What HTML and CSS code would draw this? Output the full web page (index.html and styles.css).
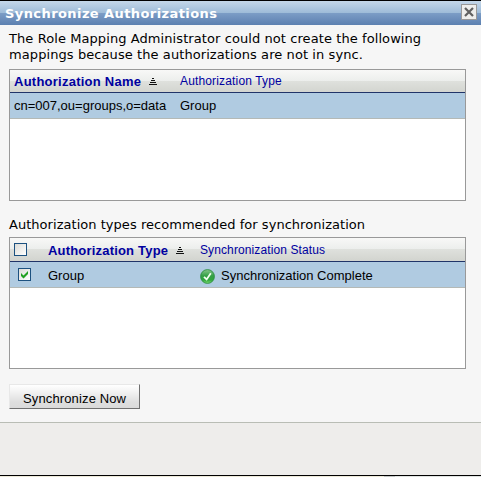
FILE: index.html
```html
<!DOCTYPE html>
<html lang="en">
<head>
<meta charset="utf-8">
<title>Synchronize Authorizations</title>
<link rel="stylesheet" href="styles.css">
</head>
<body>
<div class="dialog">
  <header class="titlebar">
    <h1 class="title">Synchronize Authorizations</h1>
    <button class="close" aria-label="Close">
      <svg width="10" height="10" viewBox="0 0 10 10"><path d="M1 1L9 9M9 1L1 9" stroke="#606060" stroke-width="2.2"/></svg>
    </button>
  </header>
  <main class="content">
    <p class="message">The Role Mapping Administrator could not create the following<br>mappings because the authorizations are not in sync.</p>
    <section class="grid mappings">
      <div class="head">
        <span class="sorted">Authorization Name</span>
        <svg class="sort" width="8" height="7" viewBox="0 0 8 7" shape-rendering="crispEdges"><path d="M3 .5H5M2 2.5H6M1 4.5H7M0 6.5H8" stroke="#111"/></svg>
        <span class="column type">Authorization Type</span>
      </div>
      <div class="row">
        <span class="name">cn=007,ou=groups,o=data</span>
        <span>Group</span>
      </div>
    </section>
    <p class="label">Authorization types recommended for synchronization</p>
    <section class="grid types">
      <div class="head">
        <span class="box all"></span>
        <span class="sorted kind">Authorization Type</span>
        <svg class="sort" width="8" height="7" viewBox="0 0 8 7" shape-rendering="crispEdges"><path d="M3 .5H5M2 2.5H6M1 4.5H7M0 6.5H8" stroke="#111"/></svg>
        <span class="column status">Synchronization Status</span>
      </div>
      <div class="row">
        <span class="box one"><svg width="11" height="11" viewBox="0 0 11 11"><path d="M2 4L4.5 6.5L9 2V5L4.5 9.5L2 7Z" fill="#21a121"/></svg></span>
        <span class="group">Group</span>
        <svg class="ok" width="15" height="15" viewBox="0 0 15 15">
          <defs><linearGradient id="g" x1="0" y1="0" x2="0" y2="1"><stop offset="0" stop-color="#86c68a"/><stop offset=".45" stop-color="#35a047"/><stop offset=".75" stop-color="#2fa63c"/><stop offset="1" stop-color="#7ddc72"/></linearGradient></defs>
          <circle cx="7.5" cy="7.5" r="6.9" fill="url(#g)" stroke="#2c8f45" stroke-width=".9"/>
          <path d="M4 7.8L6.6 10.4L10.8 4.2" fill="none" stroke="#f2fff2" stroke-width="1.8"/>
        </svg>
        <span>Synchronization Complete</span>
      </div>
    </section>
    <button class="action">Synchronize Now</button>
  </main>
  <footer class="footer"></footer>
</div>
<div class="edge"><i class="sand"></i><i class="thumb"></i></div>
</body>
</html>
```

FILE: styles.css
```css
* { box-sizing: border-box; }

body {
  margin: 0;
  width: 481px;
  height: 477px;
  overflow: hidden;
  background: #f6f6f6;
  color: #000;
  font: 13px/16px "Liberation Sans", Arial, sans-serif;
}

.dialog {
  display: flex;
  flex-direction: column;
  height: 476px;
  border-top: 1px solid #000;
  border-bottom: 1px solid #000;
}

.titlebar {
  display: flex;
  justify-content: space-between;
  height: 24px;
  padding: 3px 4px 0 5px;
  background: linear-gradient(#c4d7e9 0, #9dbbd8 12px, #7c9dc6 12px, #5c80b0 24px);
}

.title {
  margin: 2px 0 0;
  color: #fff;
  font: bold 13px/16px "DejaVu Sans", Verdana, sans-serif;
  letter-spacing: .419px;
}

.close {
  display: flex;
  align-items: center;
  justify-content: center;
  width: 16px;
  height: 16px;
  padding: 0;
  border: 1px solid #999;
  background: #eeeeec;
}

.content {
  height: 397px;
  padding: 6px 15px 0 9px;
}

.message,
.label {
  margin: 0;
  font: 13px/16px "DejaVu Sans", Verdana, sans-serif;
  letter-spacing: .082px;
  white-space: nowrap;
}

.label {
  margin: 16px 0 4px;
  letter-spacing: .037px;
}

.grid {
  height: 132px;
  border: 1px solid #999;
  background: #fff;
}

.mappings { margin-top: 6px; }

.head,
.row {
  display: flex;
  align-items: flex-start;
  white-space: nowrap;
}

.head {
  height: 23px;
  padding: 4px 0 0 4px;
  border-bottom: 1px solid #203468;
  background: linear-gradient(#f8f8f7 0, #eceeec 11px, #dfe1dd 11px, #d3d5d0 22px);
  color: #0000a0;
}

.types .head {
  height: 24px;
  padding-top: 5px;
}

.row {
  height: 26px;
  padding: 5px 0 0 4px;
  border-bottom: 1px solid #b4b9b6;
  background: #b0cbe1;
}

.types .row { padding-top: 6px; }

.sorted {
  width: 135px;
  font-weight: bold;
  letter-spacing: .248px;
}

.kind {
  width: 128px;
  letter-spacing: .191px;
}

.sort { margin-top: 4px; }

.column {
  font-size: 12px;
  line-height: 15px;
}

.type {
  margin-left: 23px;
  letter-spacing: .153px;
}

.status {
  margin-left: 16px;
  letter-spacing: .108px;
}

.name { width: 166px; }

.box {
  width: 13px;
  height: 13px;
  border: 1px solid #1c5180;
  background: linear-gradient(135deg, #dcdcd7, #fff);
}

.box svg { display: block; }

.all { margin-right: 21px; }

.one { margin: 0 17px 0 4px; }

.group { width: 153px; }

.ok { margin: 1px 6px 0 -1px; }

.action {
  display: block;
  width: 131px;
  height: 25px;
  margin-top: 15px;
  padding: 4px 0 0 13px;
  border: 1px solid #e8e8e8;
  border-right-color: #707070;
  border-bottom-color: #707070;
  background: linear-gradient(#fff 0, #f4f4f4 6px, #dedede 17px, #dadada 100%);
  color: #000;
  font: inherit;
  letter-spacing: .132px;
  text-align: left;
}

.footer {
  flex: 1;
  border-top: 1px solid #b9bdb5;
  background: #eeedeb;
}

.edge {
  display: flex;
  height: 1px;
  background: #dfe3e0;
}

.sand {
  width: 384px;
  background: #ece9d8;
}

.thumb {
  width: 11px;
  background: #c2c6c4;
}
```
